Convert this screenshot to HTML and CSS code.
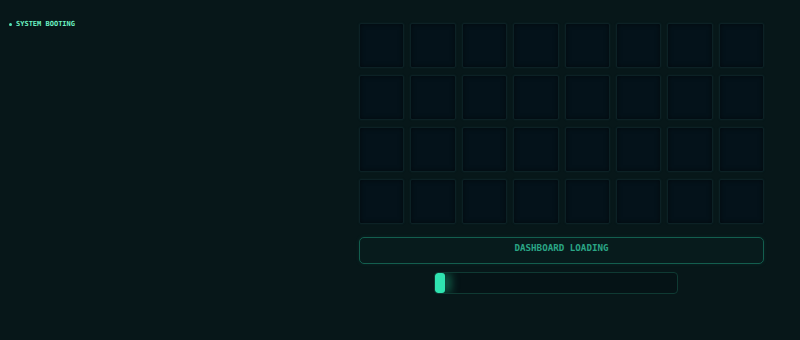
FILE: index.html
```html
<!DOCTYPE html>
<html lang="en">
<head>
    <meta charset="UTF-8">
    <meta name="viewport" content="width=device-width, initial-scale=1.0">
    <title>Dashboard Boot</title>
    <link rel="stylesheet" href="styles.css">
</head>
<body>
    <div class="screen">
        <div class="status">
            <span class="status-dot"></span>
            <span class="status-text">SYSTEM BOOTING</span>
        </div>
        <div class="panel">
            <div class="grid">
                <div class="cell"></div><div class="cell"></div><div class="cell"></div><div class="cell"></div>
                <div class="cell"></div><div class="cell"></div><div class="cell"></div><div class="cell"></div>
                <div class="cell"></div><div class="cell"></div><div class="cell"></div><div class="cell"></div>
                <div class="cell"></div><div class="cell"></div><div class="cell"></div><div class="cell"></div>
                <div class="cell"></div><div class="cell"></div><div class="cell"></div><div class="cell"></div>
                <div class="cell"></div><div class="cell"></div><div class="cell"></div><div class="cell"></div>
                <div class="cell"></div><div class="cell"></div><div class="cell"></div><div class="cell"></div>
                <div class="cell"></div><div class="cell"></div><div class="cell"></div><div class="cell"></div>
            </div>
            <div class="loading-label">DASHBOARD LOADING</div>
            <div class="progress">
                <div class="progress-fill"></div>
            </div>
        </div>
    </div>
</body>
</html>
```

FILE: styles.css
```css
body {
    margin: 0;
    height: 340px;
    background: #071719;
    font-family: "DejaVu Sans Mono", "Liberation Mono", monospace;
    overflow: hidden;
}

.screen {
    display: flex;
    justify-content: space-between;
    height: 100%;
    padding: 0 36px 0 9px;
}

.status {
    display: flex;
    align-items: center;
    gap: 4px;
    height: 10px;
    margin-top: 19px;
}

.status-dot {
    width: 3px;
    height: 3px;
    border-radius: 50%;
    background: #54e6b4;
}

.status-text {
    font-size: 7px;
    font-weight: bold;
    color: #6cf2c2;
}

.panel {
    width: 405px;
    display: flex;
    flex-direction: column;
    padding-top: 23px;
}

.grid {
    width: 100%;
    display: grid;
    grid-template-columns: repeat(8, 1fr);
    column-gap: 6px;
    row-gap: 6.5px;
}

.cell {
    aspect-ratio: 1;
    background: #04121a;
    border: 1px solid #0c2125;
    border-radius: 2px;
    box-shadow: inset 0 0 5px rgba(0, 0, 0, 0.5), 0 0 2px rgba(20, 50, 55, 0.4);
    box-sizing: border-box;
}

.loading-label {
    width: 100%;
    box-sizing: border-box;
    height: 27px;
    margin-top: 13px;
    border: 1px solid #135e4e;
    border-radius: 5px;
    background: #071b1c;
    box-shadow: 0 0 4px rgba(30, 160, 120, 0.12);
    color: #2aa585;
    font-size: 9.2px;
    font-weight: bold;
    display: flex;
    align-items: center;
    justify-content: center;
    padding-bottom: 7px;
}

.progress {
    width: 244px;
    height: 22px;
    box-sizing: border-box;
    margin: 8px 0 0 75px;
    border: 1px solid #0f3a33;
    border-radius: 4px;
    background: #051316;
    overflow: hidden;
    display: flex;
}

.progress-fill {
    width: 10px;
    height: 100%;
    border-radius: 3px;
    background: #2fe3b0;
    box-shadow: 6px 0 8px rgba(30, 180, 130, 0.45);
}
```
